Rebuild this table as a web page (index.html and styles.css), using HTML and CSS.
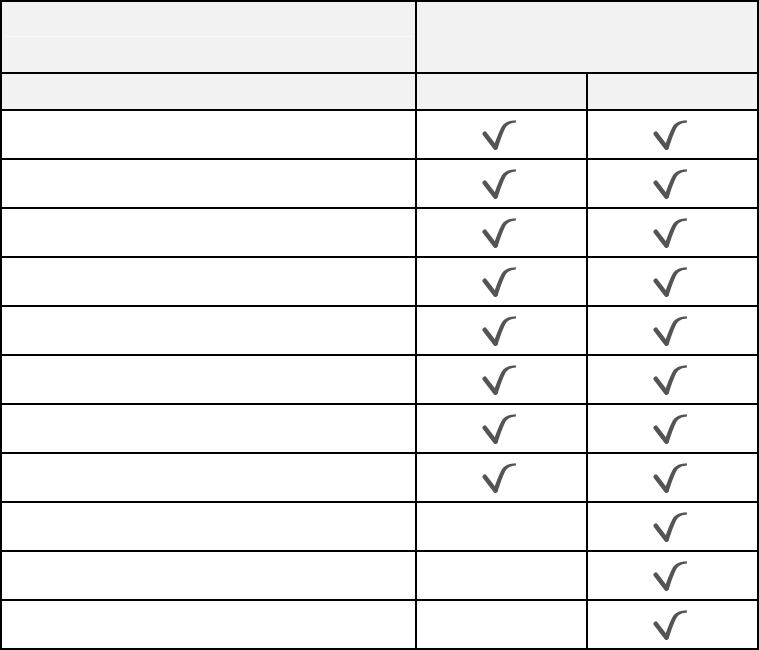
FILE: index.html
```html
<!DOCTYPE html>
<html lang="en">
<head>
<meta charset="utf-8">
<title>Comparison table</title>
<link rel="stylesheet" href="styles.css">
</head>
<body>
<svg class="defs" width="0" height="0" aria-hidden="true">
  <symbol id="tick" viewBox="0 0 35 30">
    <path d="M2.8 13.8 L13.4 27.6" fill="none" stroke="currentColor" stroke-width="4.6" stroke-linecap="round"/>
    <path d="M11.4 27.4 C13.8 20 16.8 12 19.8 6.6 C22.6 2.2 27.6 0.5 33.8 0.3 L34 2.5 C29.2 2.7 25.8 4.2 23.4 8 C20.8 13 18 21 15.6 28.8 Z" fill="currentColor"/>
  </symbol>
</svg>
<table class="grid">
  <thead>
    <tr class="h-top">
      <th class="h-cell h-a"></th>
      <th class="h-cell h-span" colspan="2" rowspan="2"></th>
    </tr>
    <tr class="h-mid">
      <th class="h-cell h-b"><span class="h-split"></span></th>
    </tr>
    <tr class="h-sub">
      <th class="h-cell"></th>
      <th class="h-cell"></th>
      <th class="h-cell"></th>
    </tr>
  </thead>
  <tbody>
    <tr><td class="c-name"></td><td class="c-mark"><svg class="tick"><use href="#tick"/></svg></td><td class="c-mark"><svg class="tick"><use href="#tick"/></svg></td></tr>
    <tr><td class="c-name"></td><td class="c-mark"><svg class="tick"><use href="#tick"/></svg></td><td class="c-mark"><svg class="tick"><use href="#tick"/></svg></td></tr>
    <tr><td class="c-name"></td><td class="c-mark"><svg class="tick"><use href="#tick"/></svg></td><td class="c-mark"><svg class="tick"><use href="#tick"/></svg></td></tr>
    <tr><td class="c-name"></td><td class="c-mark"><svg class="tick"><use href="#tick"/></svg></td><td class="c-mark"><svg class="tick"><use href="#tick"/></svg></td></tr>
    <tr><td class="c-name"></td><td class="c-mark"><svg class="tick"><use href="#tick"/></svg></td><td class="c-mark"><svg class="tick"><use href="#tick"/></svg></td></tr>
    <tr><td class="c-name"></td><td class="c-mark"><svg class="tick"><use href="#tick"/></svg></td><td class="c-mark"><svg class="tick"><use href="#tick"/></svg></td></tr>
    <tr><td class="c-name"></td><td class="c-mark"><svg class="tick"><use href="#tick"/></svg></td><td class="c-mark"><svg class="tick"><use href="#tick"/></svg></td></tr>
    <tr><td class="c-name"></td><td class="c-mark"><svg class="tick"><use href="#tick"/></svg></td><td class="c-mark"><svg class="tick"><use href="#tick"/></svg></td></tr>
    <tr><td class="c-name"></td><td class="c-mark"></td><td class="c-mark"><svg class="tick"><use href="#tick"/></svg></td></tr>
    <tr><td class="c-name"></td><td class="c-mark"></td><td class="c-mark"><svg class="tick"><use href="#tick"/></svg></td></tr>
    <tr><td class="c-name"></td><td class="c-mark"></td><td class="c-mark"><svg class="tick"><use href="#tick"/></svg></td></tr>
  </tbody>
</table>
</body>
</html>
```
FILE: styles.css
```css
html, body {
  margin: 0;
  padding: 0;
  background: #ffffff;
  font-family: "Liberation Sans", Arial, sans-serif;
}

.defs {
  position: absolute;
  width: 0;
  height: 0;
  overflow: hidden;
}

.grid {
  border-collapse: separate;
  border-spacing: 0;
  table-layout: fixed;
  width: 759px;
  border-top: 2px solid #000;
  border-left: 2px solid #000;
}

.grid th,
.grid td {
  padding: 0;
  border-right: 2px solid #000;
  border-bottom: 2px solid #000;
  vertical-align: middle;
  text-align: center;
}

.h-cell {
  background: #f2f2f2;
}

.h-top .h-a {
  width: 413px;
  height: 34px;
  border-bottom: 0;
}

.h-mid .h-b {
  height: 36px;
  position: relative;
}

.h-split {
  position: absolute;
  left: 3px;
  right: 3px;
  top: 0;
  height: 1px;
  background: #fbfbfb;
}

.h-sub th {
  height: 35px;
}

.grid td {
  height: 47px;
}

.c-name {
  width: 413px;
}

.c-mark {
  width: 169px;
}

.tick {
  display: block;
  width: 35px;
  height: 30px;
  margin: 0 auto;
  color: #545454;
  position: relative;
  left: -2px;
}
```
